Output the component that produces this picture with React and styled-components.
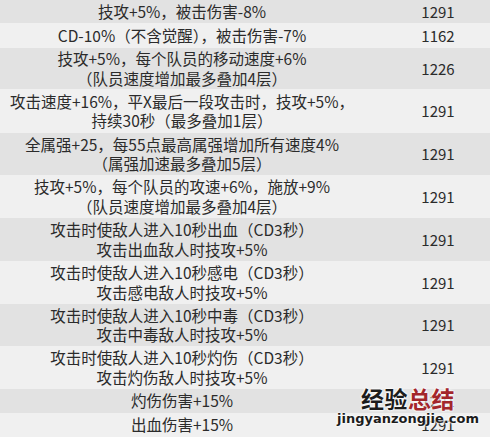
import styled, { createGlobalStyle } from "styled-components";

const GlobalStyle = createGlobalStyle`
  html, body {
    margin: 0;
    padding: 0;
    background: #efefef;
    overflow: hidden;
  }
`;

const Page = styled.div`
  position: relative;
  width: 490px;
  height: 437px;
  overflow: hidden;
  font-family: "Noto Sans CJK SC", "Noto Sans", sans-serif;
  color: #2b2b2b;
`;

const Table = styled.div`
  display: flex;
  flex-direction: column;
  width: 512px;
`;

const Row = styled.div`
  display: grid;
  grid-template-columns: 364px 148px;
  align-items: center;
  height: ${(props) => props.$h}px;
  background-color: ${(props) => (props.$shade ? "#e2e2e2" : "#f0f0f0")};
`;

const Desc = styled.div`
  display: flex;
  flex-direction: column;
  align-items: center;
  font-size: 15.5px;
  line-height: 19.5px;
  white-space: nowrap;
`;

const Value = styled.div`
  text-align: center;
  font-size: 15px;
  line-height: 20px;
`;

const Watermark = styled.div`
  position: absolute;
  left: 340px;
  top: 385px;
  display: flex;
  flex-direction: column;
  align-items: center;
  width: 136px;
`;

const Brand = styled.div`
  font-size: 23px;
  line-height: 26px;
  font-weight: 700;
  letter-spacing: 0.5px;
  text-shadow: 0 0 2px #fff, 0 0 2px #fff, 0 0 3px #fff;
`;

const BrandPart = styled.span`
  color: ${(props) => (props.$red ? "#a3262b" : "#1c1c1c")};
`;

const Domain = styled.div`
  font-family: "DejaVu Sans", sans-serif;
  font-size: 13px;
  line-height: 15px;
  font-weight: 700;
  color: #1c1c1c;
  text-shadow: 0 0 2px #fff, 0 0 2px #fff, 0 0 3px #fff;
`;

const rows = [
  { h: 23, lines: ["技攻+5%，被击伤害-8%"], value: "1291" },
  { h: 25, lines: ["CD-10%（不含觉醒），被击伤害-7%"], value: "1162" },
  {
    h: 41,
    lines: ["技攻+5%，每个队员的移动速度+6%", "（队员速度增加最多叠加4层）"],
    value: "1226",
  },
  {
    h: 44,
    lines: ["攻击速度+16%，平X最后一段攻击时，技攻+5%，", "持续30秒（最多叠加1层）"],
    value: "1291",
  },
  {
    h: 42,
    lines: ["全属强+25，每55点最高属强增加所有速度4%", "（属强加速最多叠加5层）"],
    value: "1291",
  },
  {
    h: 43,
    lines: ["技攻+5%，每个队员的攻速+6%，施放+9%", "（队员速度增加最多叠加4层）"],
    value: "1291",
  },
  {
    h: 43,
    lines: ["攻击时使敌人进入10秒出血（CD3秒）", "攻击出血敌人时技攻+5%"],
    value: "1291",
  },
  {
    h: 43,
    lines: ["攻击时使敌人进入10秒感电（CD3秒）", "攻击感电敌人时技攻+5%"],
    value: "1291",
  },
  {
    h: 42,
    lines: ["攻击时使敌人进入10秒中毒（CD3秒）", "攻击中毒敌人时技攻+5%"],
    value: "1291",
  },
  {
    h: 43,
    lines: ["攻击时使敌人进入10秒灼伤（CD3秒）", "攻击灼伤敌人时技攻+5%"],
    value: "1291",
  },
  { h: 24, lines: ["灼伤伤害+15%"], value: "1291" },
  { h: 24, lines: ["出血伤害+15%"], value: "1291" },
];

export default function App() {
  return (
    <Page>
      <GlobalStyle />
      <Table>
        {rows.map((row, i) => (
          <Row key={i} $h={row.h} $shade={i % 2 === 0}>
            <Desc>
              {row.lines.map((line) => (
                <span key={line}>{line}</span>
              ))}
            </Desc>
            <Value>{row.value}</Value>
          </Row>
        ))}
      </Table>

      {/* site watermark */}
      <Watermark>
        <Brand>
          <BrandPart>经验</BrandPart>
          <BrandPart $red>总结</BrandPart>
        </Brand>
        <Domain>jingyanzongjie.com</Domain>
      </Watermark>
    </Page>
  );
}
